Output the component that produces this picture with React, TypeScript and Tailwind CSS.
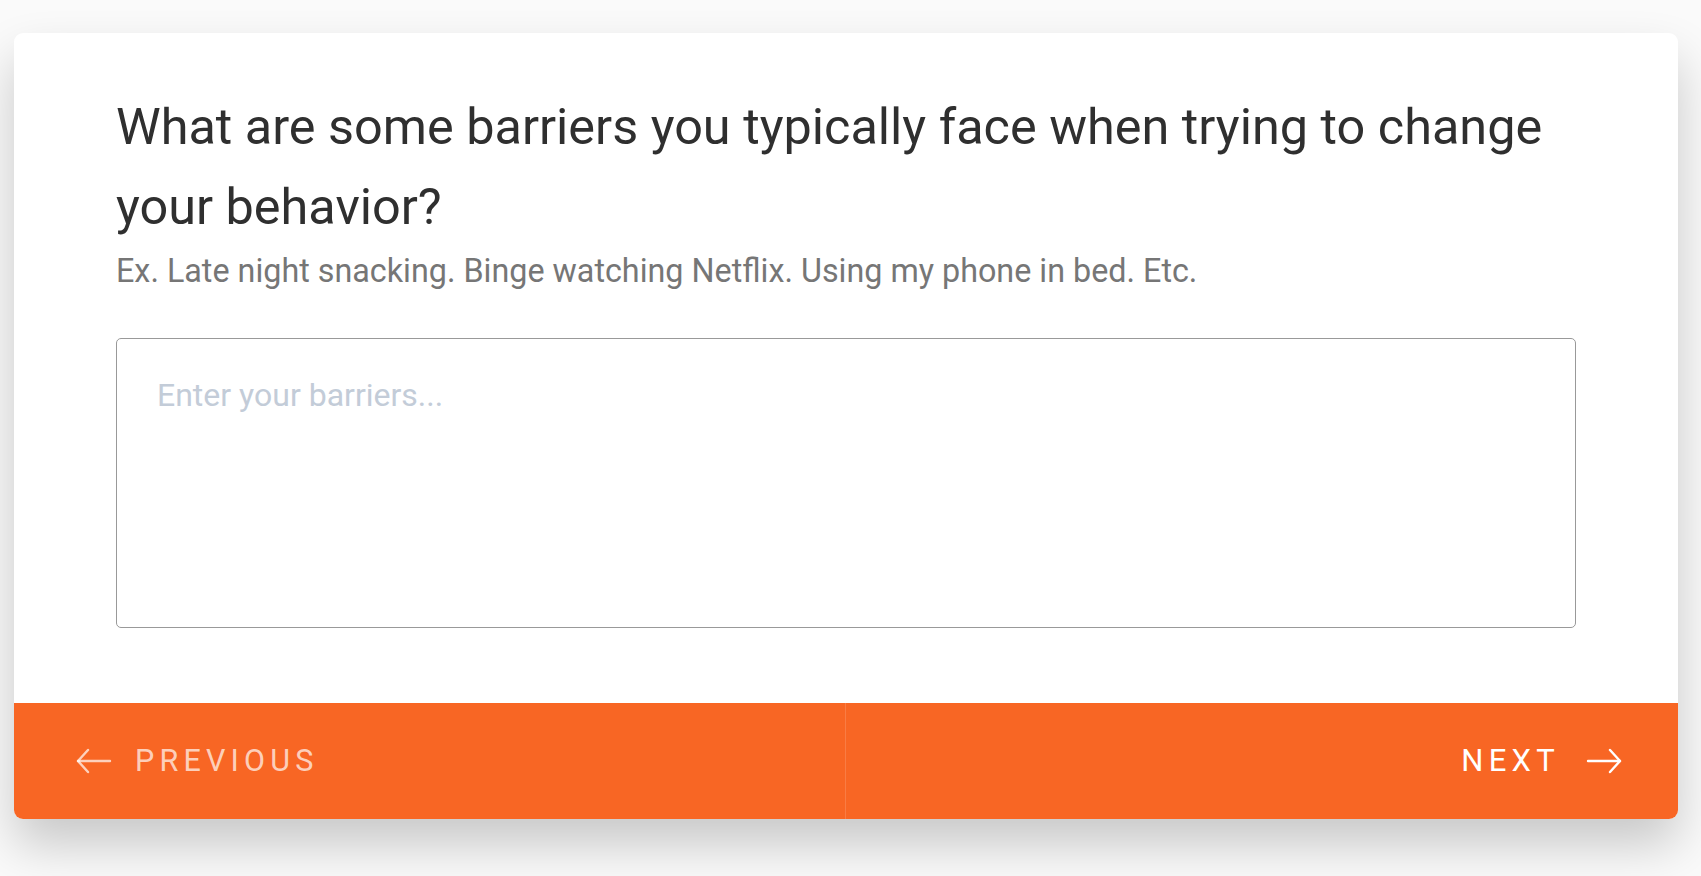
import { useState } from "react";

function ArrowLeft() {
  return (
    <svg width="36" height="26" viewBox="0 0 36 26" fill="none" stroke="currentColor" strokeWidth="2.4" strokeLinecap="round" strokeLinejoin="round">
      <path d="M34 13H2" />
      <path d="M12 2L2 13l10 11" />
    </svg>
  );
}

function ArrowRight() {
  return (
    <svg width="36" height="26" viewBox="0 0 36 26" fill="none" stroke="currentColor" strokeWidth="2.4" strokeLinecap="round" strokeLinejoin="round">
      <path d="M2 13h32" />
      <path d="M24 2l10 11-10 11" />
    </svg>
  );
}

export default function App() {
  const [barriers, setBarriers] = useState("");

  return (
    <div className="min-h-screen bg-[#fafafa] pt-[33px] pl-[14px] pr-[23px] font-['Roboto','Noto_Sans',sans-serif]">
      <div className="rounded-[9px] bg-white shadow-[0_26px_50px_rgba(0,0,0,0.2)] overflow-hidden">
        <div className="px-[102px] pt-[54px] pb-[75px]">
          <h1 className="text-[50.4px] leading-[80px] text-[#2f2f2f] font-normal">
            What are some barriers you typically face when trying to change your behavior?
          </h1>
          <p className="text-[32.3px] leading-[40px] text-[#767676] mt-[4px]">
            Ex. Late night snacking. Binge watching Netflix. Using my phone in bed. Etc.
          </p>
          <textarea
            value={barriers}
            onChange={(e) => setBarriers(e.target.value)}
            placeholder="Enter your barriers..."
            className="mt-[47px] block w-full h-[290px] resize-none rounded-[5px] border-[1.5px] border-[#999999] px-[40px] py-[36px] text-[32px] leading-[40px] text-[#2f2f2f] placeholder-[#c3ccd8] focus:outline-none"
          />
        </div>
        <div className="grid grid-cols-2 h-[116px] bg-[#f86624]">
          <button className="flex items-center gap-[23px] pl-[62px] text-white/70 text-[30.5px] tracking-[0.17em] border-r border-white/15">
            <ArrowLeft />
            <span>PREVIOUS</span>
          </button>
          <button className="flex items-center justify-end gap-[26px] pr-[56px] text-white text-[31px] tracking-[0.17em]">
            <span>NEXT</span>
            <ArrowRight />
          </button>
        </div>
      </div>
    </div>
  );
}
